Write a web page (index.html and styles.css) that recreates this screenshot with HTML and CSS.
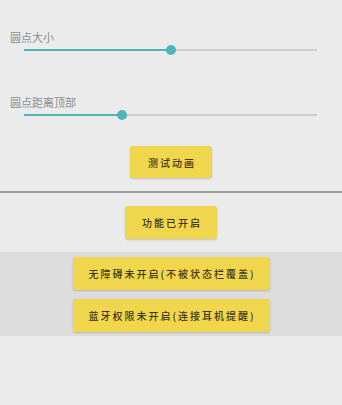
FILE: index.html
```html
<!DOCTYPE html>
<html lang="zh-CN">
<head>
<meta charset="utf-8">
<title>设置</title>
<link rel="stylesheet" href="styles.css">
</head>
<body>
<main class="page">
  <section class="settings">
    <div class="label">圆点大小</div>
    <div class="slider"><div class="track"><div class="fill" style="width:50.2%"></div><div class="thumb" style="left:50.2%"></div></div></div>
    <div class="label label-second">圆点距离顶部</div>
    <div class="slider"><div class="track"><div class="fill" style="width:33.4%"></div><div class="thumb" style="left:33.4%"></div></div></div>
    <div class="row row-test"><button class="btn btn-test">测试动画</button></div>
  </section>
  <hr class="divider">
  <div class="row row-status"><button class="btn btn-status">功能已开启</button></div>
  <section class="band">
    <button class="btn btn-wide">无障碍未开启(不被状态栏覆盖)</button>
    <button class="btn btn-wide">蓝牙权限未开启(连接耳机提醒)</button>
  </section>
</main>
</body>
</html>
```

FILE: styles.css
```css
html, body {
  margin: 0;
  padding: 0;
  background: #ebebeb;
  font-family: "Noto Sans CJK SC", "Noto Sans", sans-serif;
}

.page {
  display: flex;
  flex-direction: column;
  width: 342px;
}

.settings {
  display: flex;
  flex-direction: column;
  padding-top: 30px;
}

.label {
  height: 14px;
  line-height: 14px;
  font-size: 11px;
  color: #8c8c8c;
  margin-left: 10px;
}

.label-second {
  margin-top: 40px;
}

.slider {
  height: 10px;
  margin: 1px 25px 0 24px;
  display: flex;
  align-items: center;
}

.track {
  position: relative;
  flex: 1;
  height: 2px;
  background: #cdcdcd;
}

.fill {
  height: 2px;
  background: #4fb4b6;
}

.thumb {
  position: absolute;
  top: 50%;
  width: 10px;
  height: 10px;
  border-radius: 50%;
  background: #4fb4b6;
  transform: translate(-50%, -50%);
}

.row {
  display: flex;
  justify-content: center;
}

.row-test {
  margin-top: 26px;
}

.btn {
  font-family: "Noto Sans CJK SC", "Noto Sans", sans-serif;
  font-size: 10px;
  font-weight: 500;
  letter-spacing: 2px;
  color: #40361c;
  background: #f0d64c;
  border: none;
  border-radius: 3px;
  box-shadow: 0 1px 2px rgba(0, 0, 0, 0.18);
  padding: 0 15px 0 17px;
  margin: 0;
}

.btn-test {
  height: 32px;
  padding: 0 16px 0 18px;
}

.divider {
  margin: 13px 0 0 0;
  border: none;
  height: 2px;
  background: #9d9d9d;
}

.row-status {
  margin-top: 13px;
}

.btn-status {
  height: 33px;
}

.band {
  margin-top: 13px;
  background: #dcdcdc;
  padding: 5px 0 4px;
  display: flex;
  flex-direction: column;
  align-items: center;
  gap: 9px;
}

.btn-wide {
  width: 197px;
  height: 33px;
  padding: 0;
  text-indent: 2px;
}
```
